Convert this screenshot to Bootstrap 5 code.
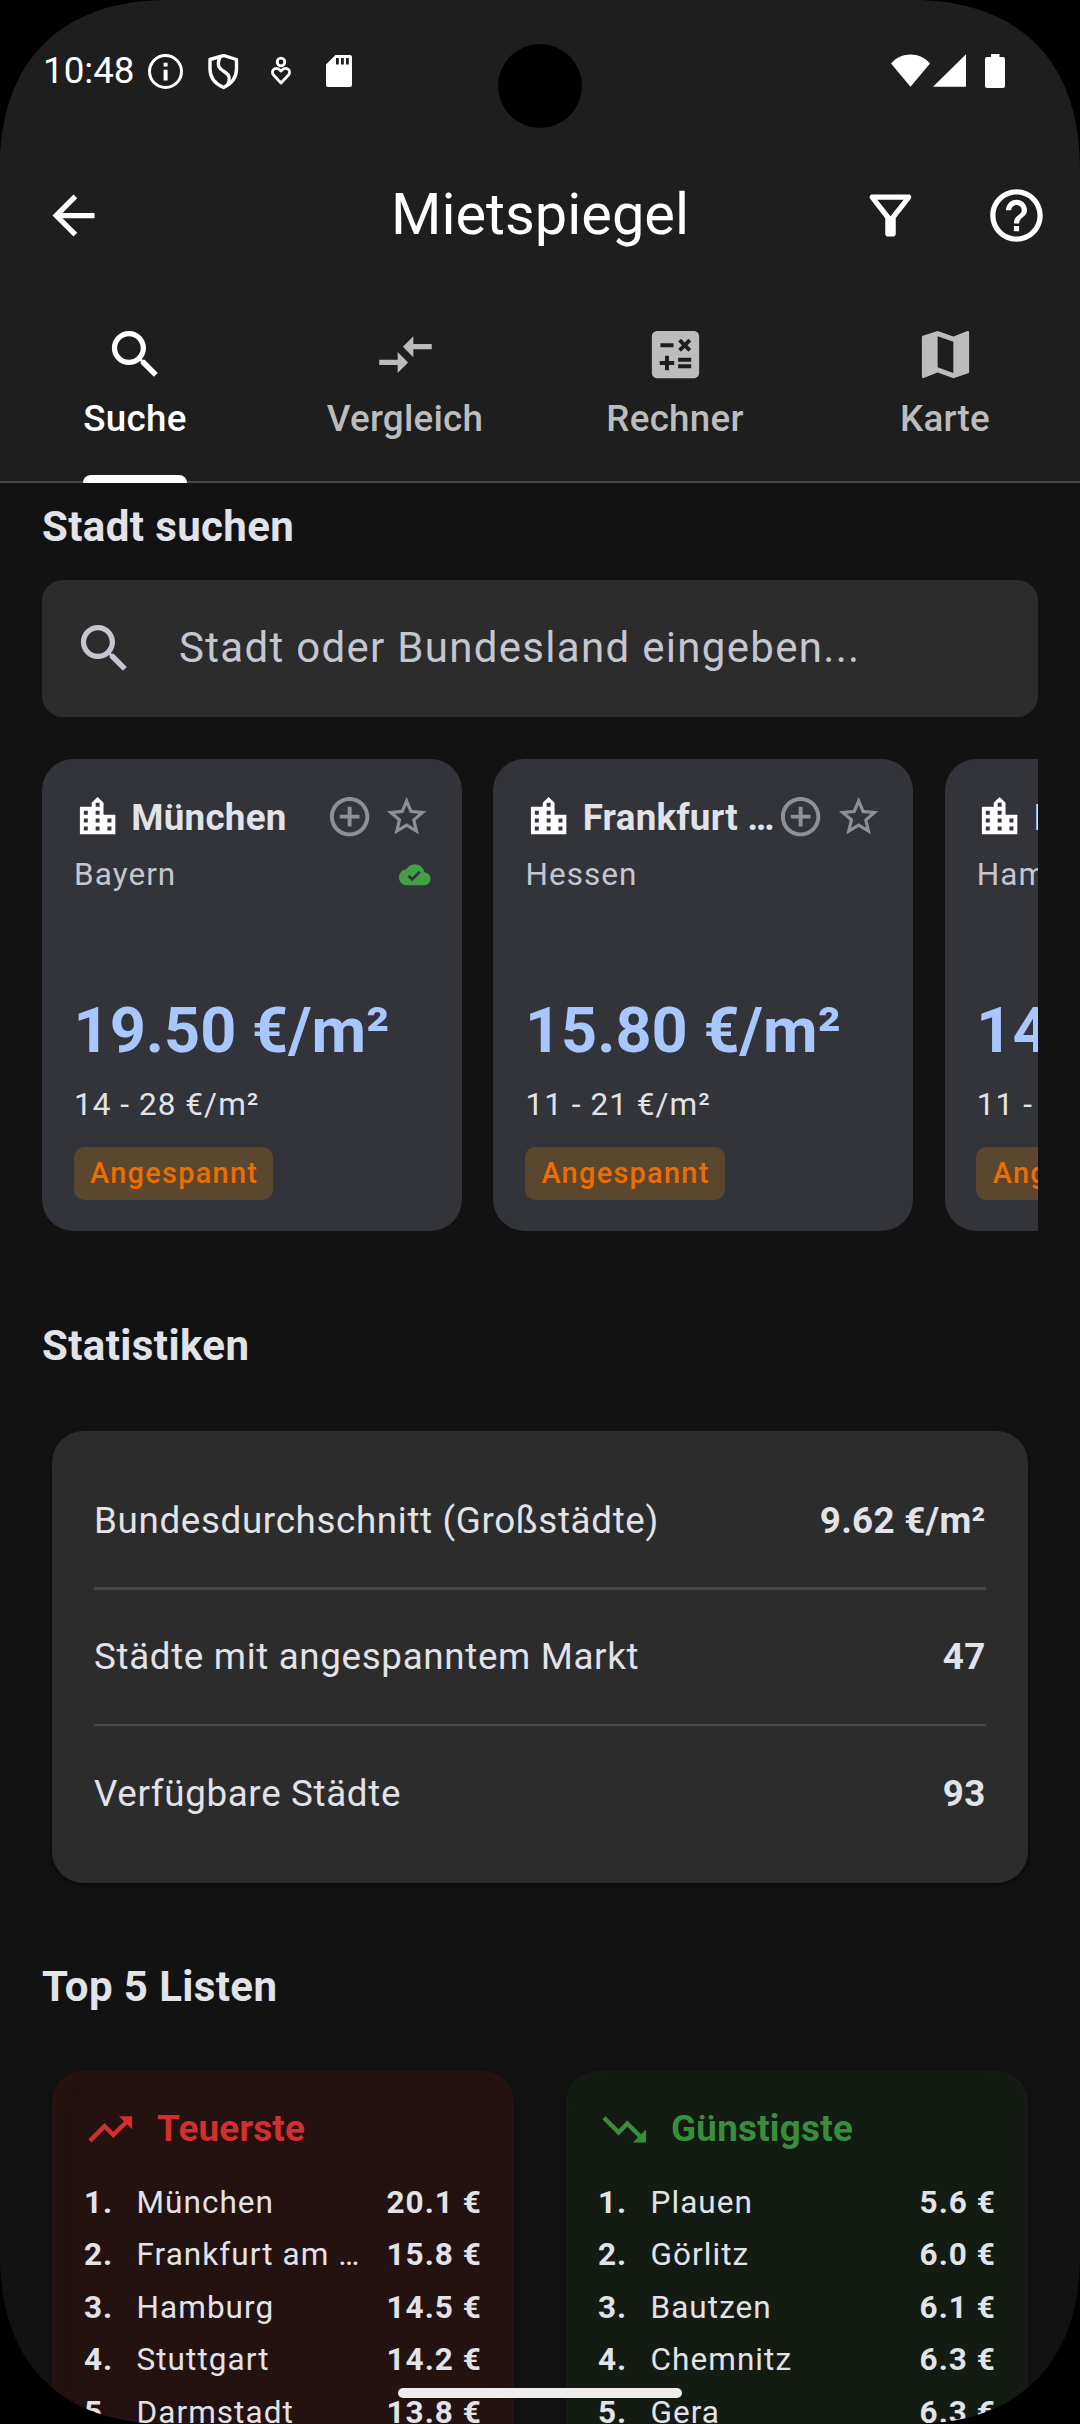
<!DOCTYPE html>
<html lang="de" data-bs-theme="dark">
<head>
<meta charset="utf-8">
<meta name="viewport" content="width=device-width, initial-scale=1">
<title>Mietspiegel</title>
<link href="https://cdn.jsdelivr.net/npm/bootstrap@5.3.0/dist/css/bootstrap.min.css" rel="stylesheet">
<style>
  :root { --ink: #e2e2e9; --muted: #c4c6d0; --line: #43474a; }
  body { margin: 0; background: #000; font-family: Roboto, "Liberation Sans", sans-serif; color: var(--ink); overflow: hidden; }
  svg { display: block; flex: none; fill: currentColor; }
  .phone { width: 1080px; height: 2424px; background: #121212; }
  .topbar { height: 483px; background: #1e1e1e; color: #fff; }
  .statusbar { height: 142px; padding: 0 74px 0 43px; }
  .clock { font-size: 36.75px; line-height: 52px; padding-top: 45px; width: 105px; }
  .status-icons { padding-top: 54px; height: 90px; }
  .appbar { height: 147px; padding: 0 32px 0 42px; }
  .screen-title { font-size: 57.75px; line-height: 73.5px; font-weight: 400; padding-bottom: 1px; }
  .i24 { width: 63px; height: 63px; }
  .i20 { width: 52.5px; height: 52.5px; }
  .i18 { width: 47.25px; height: 47.25px; }
  .i12 { width: 31.5px; height: 31.5px; }
  .actions { gap: 63px; }
  .tabs-row { height: 194px; border-bottom: 2px solid var(--line); }
  .tabs-row .nav-link { color: #bcbcbc; font-size: 36.75px; line-height: 52.5px; font-weight: 500; letter-spacing: .26px; padding: 34px 0 0; border: 0; border-radius: 0; height: 194px; }
  .tabs-row .nav-link.active { color: #fff; background: none; }
  .tabs-row .nav-link span { margin-top: 6.5px; }
  .indicator { width: 104px; height: 8px; background: #fff; border-radius: 8px 8px 0 0; margin-top: auto; }
  .content { padding: 12px 42px 0; }
  .heading { font-size: 42px; line-height: 63px; font-weight: 700; letter-spacing: .39px; margin: 0; color: var(--ink); }
  .heading-stats { margin-top: 82.5px; }
  .heading-top { margin-top: 72.5px; }
  .searchbox { height: 137px; margin-top: 22px; border-radius: 21px; background: #2c2c2c; color: var(--muted); padding: 0 31px; gap: 43px; }
  .searchbox div { font-size: 42px; letter-spacing: 1.31px; line-height: 63px; padding-bottom: 2px; }
  .city-strip { margin-top: 42px; gap: 31.4px; overflow: hidden; height: 472.5px; }
  .city { width: 420px; flex: none; height: 472px; background: #33343a; border: 0; border-radius: 31.5px; padding: 31.5px; color: var(--ink); }
  .city-name { font-size: 36.75px; line-height: 51.5px; padding-top: 1px; font-weight: 700; letter-spacing: .26px; margin-left: 10.5px; white-space: nowrap; }
  .ic-outline { color: #8e9099; }
  .star-ic { margin-left: 10.5px; }
  .t12 { font-size: 31.5px; line-height: 42px; letter-spacing: 1.05px; }
  .state { color: var(--muted); margin-top: 10.5px; padding-left: .5px; }
  .price { font-size: 63px; line-height: 84px; font-weight: 700; color: #a8c7ff; white-space: nowrap; }
  .range { margin: 10.5px 0 21px; padding-left: .5px; white-space: nowrap; }
  .market { font-size: 28.875px; line-height: 42px; font-weight: 500; letter-spacing: 1.31px; color: #ef6c00; background: #5b472e; border-radius: 10.5px; padding: 5.5px 15px 5.25px 16.5px; white-space: nowrap; }
  .stats { margin: 54px 10.5px 0 10px; background: #2c2c2c; border: 0; border-radius: 31.5px; padding: 42px; height: 451.5px; box-shadow: 0 3px 6px rgba(0,0,0,.4); color: var(--ink); }
  .stat-line { padding: 22px 0 20px; font-size: 36.75px; line-height: 52.5px; letter-spacing: .656px; }
  .stat-line b { font-weight: 700; letter-spacing: .26px; }
  .rule { height: 2.6px; background: #43474e; margin: 19.7px 0; }
  .tops { margin: 53px 10.5px 0 10px; gap: 52.5px; }
  .rank { flex: 1 1 0; border: 0; border-radius: 31.5px; padding: 32px 31.5px; height: 480px; color: var(--ink); }
  .rank-hot { background: #241211; box-shadow: 0 3px 6px rgba(0,0,0,.25), inset 0 0 18px #281513; }
  .rank-low { background: #141b13; box-shadow: 0 3px 6px rgba(0,0,0,.25), inset 0 0 18px #161e16; }
  .rank-head { font-size: 36.75px; line-height: 52.5px; font-weight: 700; letter-spacing: .26px; gap: 21px; margin-bottom: 21px; }
  .hot { color: #d32f2f; } .low { color: #388e3c; }
  .rank-row { padding: 5.25px 0; }
  .rank-row b { font-weight: 700; white-space: nowrap; }
  .rank-row b:first-child { width: 52.5px; padding-left: .5px; }
  .rank-row span { padding-left: .5px; }
  .camera { position: absolute; left: 498px; top: 44px; width: 84px; height: 84px; border-radius: 50%; background: #000; }
  .homebar { position: absolute; left: 398px; top: 2388px; width: 284px; height: 10px; border-radius: 5px; background: #eeecec; }
  .bezel { position: absolute; inset: 0; fill: #000; }
</style>
</head>
<body>
<svg width="0" height="0" class="position-absolute" aria-hidden="true">
  <symbol id="search" viewBox="0 0 24 24"><path d="M15.5 14h-.79l-.28-.27C15.41 12.59 16 11.11 16 9.5 16 5.91 13.09 3 9.5 3S3 5.91 3 9.5 5.91 16 9.5 16c1.61 0 3.09-.59 4.23-1.57l.27.28v.79l5 4.99L20.49 19l-4.99-5zm-6 0C7.01 14 5 11.99 5 9.5S7.01 5 9.5 5 14 7.01 14 9.5 11.99 14 9.5 14z"/></symbol>
  <symbol id="city" viewBox="0 0 24 24"><path d="M15 11V5l-3-3-3 3v2H3v14h18V11h-6zm-8 8H5v-2h2v2zm0-4H5v-2h2v2zm0-4H5V9h2v2zm6 8h-2v-2h2v2zm0-4h-2v-2h2v2zm0-4h-2V9h2v2zm0-4h-2V5h2v2zm6 12h-2v-2h2v2zm0-4h-2v-2h2v2z"/></symbol>
  <symbol id="plus" viewBox="0 0 24 24"><path d="M13 7h-2v4H7v2h4v4h2v-4h4v-2h-4V7zm-1-5C6.48 2 2 6.48 2 12s4.48 10 10 10 10-4.48 10-10S17.52 2 12 2zm0 18c-4.41 0-8-3.59-8-8s3.59-8 8-8 8 3.59 8 8-3.59 8-8 8z"/></symbol>
  <symbol id="star" viewBox="0 0 24 24"><path d="M22 9.24l-7.19-.62L12 2 9.19 8.63 2 9.24l5.46 4.73L5.82 21 12 17.27 18.18 21l-1.63-7.03L22 9.24zM12 15.4l-3.76 2.27 1-4.28-3.32-2.88 4.38-.38L12 6.1l1.71 4.04 4.38.38-3.32 2.88 1 4.28L12 15.4z"/></symbol>
</svg>

<div class="phone position-relative overflow-hidden">
  <header class="topbar">
    <div class="statusbar d-flex align-items-start justify-content-between">
      <div class="d-flex align-items-start">
        <div class="clock">10:48</div>
        <svg class="status-icons" width="212" viewBox="148 0 212 36">
          <g fill="none" stroke="#fff" stroke-width="3">
            <circle cx="165.500" cy="17.500" r="16"/>
            <path d="M210 5.500 L223.500 1.500 L236.500 5.500 V15 C236.500 24 231 30 223.500 33.500 C215.500 30 210 24 210 15 Z" stroke-width="3.400" stroke-linejoin="round"/>
            <path d="M220 3.500 C215.500 13 221 15.500 225.500 18.500 C230 21.500 230.500 25 227.500 31" stroke-width="3.400"/>
            <circle cx="281" cy="8" r="3.800" stroke-width="2.800"/>
            <path d="M281 29 L273.500 21 C270 16 276 11.500 281 17 C286 11.500 292 16 288.500 21 Z" stroke-width="2.800" stroke-linejoin="round"/>
          </g>
          <path d="M163.600 8.800h4v3.700h-4zM163.600 15.800h4v10.700h-4z"/>
          <path fill-rule="evenodd" d="M335.500 1H350a2 2 0 0 1 2 2V31a2 2 0 0 1-2 2H328a2 2 0 0 1-2-2V10.500ZM336 4v6.500h2.800V4ZM341 4v6.500h2.800V4ZM346 4v6.500h2.800V4Z"/>
        </svg>
      </div>
      <svg class="status-icons" width="116" viewBox="890 0 116 36">
        <path d="M891 9.500 C901 -2.500 920 -2.500 930 9.500 L910.500 32.700Z"/>
        <path d="M966 .3V32.800H933Z"/>
        <path d="M991 0h8.500v3H1003a2 2 0 0 1 2 2V32a2 2 0 0 1-2 2H987a2 2 0 0 1-2-2V5a2 2 0 0 1 2-2h4Z"/>
      </svg>
    </div>

    <div class="appbar d-flex align-items-center justify-content-between position-relative">
      <svg class="i24" viewBox="0 0 24 24"><path d="M20 11H7.830l5.590-5.590L12 4l-8 8 8 8 1.410-1.410L7.830 13H20v-2z"/></svg>
      <h1 class="screen-title position-absolute start-50 translate-middle-x m-0">Mietspiegel</h1>
      <div class="actions d-flex">
        <svg class="i24" viewBox="0 0 24 24"><path d="M7 6h10l-5.010 6.300L7 6zm-2.750-.39C6.270 8.200 10 13 10 13v6c0 .55.45 1 1 1h2c.55 0 1-.45 1-1v-6s3.720-4.800 5.740-7.390c.51-.66.04-1.610-.79-1.610H5.040c-.83 0-1.300.95-.79 1.610z"/></svg>
        <svg class="i24" viewBox="0 0 24 24"><path d="M11 18h2v-2h-2v2zm1-16C6.480 2 2 6.480 2 12s4.480 10 10 10 10-4.480 10-10S17.520 2 12 2zm0 18c-4.410 0-8-3.590-8-8s3.590-8 8-8 8 3.590 8 8-3.590 8-8 8zm0-14c-2.210 0-4 1.790-4 4h2c0-1.100.9-2 2-2s2 .9 2 2c0 2-3 1.750-3 5h2c0-2.250 3-2.500 3-5 0-2.210-1.790-4-4-4z"/></svg>
      </div>
    </div>

    <nav class="tabs-row nav nav-fill flex-nowrap">
      <a class="nav-link active col-3 d-flex flex-column align-items-center"><svg class="i24"><use href="#search"/></svg><span>Suche</span><div class="indicator"></div></a>
      <a class="nav-link col-3 d-flex flex-column align-items-center"><svg class="i24" viewBox="0 0 24 24"><path d="M9.010 14H2v2h7.010v3L13 15l-3.990-4v3zm5.980-1v-3H22V8h-7.010V5L11 9l3.990 4z"/></svg><span>Vergleich</span></a>
      <a class="nav-link col-3 d-flex flex-column align-items-center"><svg class="i24" viewBox="0 0 24 24"><path d="M19 3H5c-1.100 0-2 .9-2 2v14c0 1.100.9 2 2 2h14c1.100 0 2-.9 2-2V5c0-1.100-.9-2-2-2zm-5.970 4.060L14.090 6l1.410 1.410L16.910 6l1.060 1.060-1.410 1.410 1.410 1.410-1.060 1.060-1.410-1.400-1.410 1.410-1.060-1.060 1.410-1.410-1.410-1.420zm-6.780.66h5v1.500h-5v-1.500zM11.500 16h-2v2H8v-2H6v-1.500h2v-2h1.500v2h2V16zm6.500 1.250h-5v-1.500h5v1.500zm0-2.500h-5v-1.500h5v1.500z"/></svg><span>Rechner</span></a>
      <a class="nav-link col-3 d-flex flex-column align-items-center"><svg class="i24" viewBox="0 0 24 24"><path d="M20.500 3l-.16.03L15 5.100 9 3 3.360 4.900c-.21.07-.36.25-.36.480V20.500c0 .28.22.5.5.5l.16-.03L9 18.900l6 2.100 5.640-1.900c.21-.07.36-.25.36-.48V3.500c0-.28-.22-.5-.5-.5zM15 19l-6-2.110V5l6 2.110V19z"/></svg><span>Karte</span></a>
    </nav>
  </header>

  <main class="content">
    <h2 class="heading">Stadt suchen</h2>
    <div class="searchbox d-flex align-items-center">
      <svg class="i24"><use href="#search"/></svg>
      <div>Stadt oder Bundesland eingeben...</div>
    </div>

    <section class="city-strip d-flex">
      <article class="city card">
        <div class="d-flex align-items-center">
          <svg class="i18 text-white"><use href="#city"/></svg>
          <div class="city-name flex-grow-1">München</div>
          <svg class="i18 ic-outline"><use href="#plus"/></svg>
          <svg class="i18 ic-outline star-ic"><use href="#star"/></svg>
        </div>
        <div class="state t12 d-flex align-items-center justify-content-between">Bayern
          <svg class="i12" viewBox="0 0 24 24"><path fill="#43a047" d="M19.350 10.040C18.670 6.590 15.640 4 12 4 9.110 4 6.600 5.640 5.350 8.040 2.340 8.360 0 10.910 0 14c0 3.310 2.690 6 6 6h13c2.760 0 5-2.240 5-5 0-2.640-2.050-4.780-4.650-4.960zM10 17l-3.500-3.500 1.410-1.410L10 14.170 15.180 9l1.410 1.410L10 17z"/></svg>
        </div>
        <div class="price mt-auto">19.50 €/m²</div>
        <div class="range t12">14 - 28 €/m²</div>
        <div class="market align-self-start">Angespannt</div>
      </article>
      <article class="city card">
        <div class="d-flex align-items-center">
          <svg class="i18 text-white"><use href="#city"/></svg>
          <div class="city-name flex-grow-1">Frankfurt …</div>
          <svg class="i18 ic-outline"><use href="#plus"/></svg>
          <svg class="i18 ic-outline star-ic"><use href="#star"/></svg>
        </div>
        <div class="state t12">Hessen</div>
        <div class="price mt-auto">15.80 €/m²</div>
        <div class="range t12">11 - 21 €/m²</div>
        <div class="market align-self-start">Angespannt</div>
      </article>
      <article class="city card">
        <div class="d-flex align-items-center">
          <svg class="i18 text-white"><use href="#city"/></svg>
          <div class="city-name flex-grow-1">Hamburg</div>
        </div>
        <div class="state t12">Hamburg</div>
        <div class="price mt-auto">14.50 €/m²</div>
        <div class="range t12">11 - 20 €/m²</div>
        <div class="market align-self-start">Angespannt</div>
      </article>
    </section>

    <h2 class="heading heading-stats">Statistiken</h2>
    <section class="stats card">
      <div class="stat-line d-flex justify-content-between"><span>Bundesdurchschnitt (Großstädte)</span><b>9.62 €/m²</b></div>
      <div class="rule"></div>
      <div class="stat-line d-flex justify-content-between"><span>Städte mit angespanntem Markt</span><b>47</b></div>
      <div class="rule"></div>
      <div class="stat-line d-flex justify-content-between"><span>Verfügbare Städte</span><b>93</b></div>
    </section>

    <h2 class="heading heading-top">Top 5 Listen</h2>
    <section class="tops d-flex">
      <div class="rank rank-hot card">
        <div class="rank-head hot d-flex align-items-center">
          <svg class="i20" viewBox="0 0 24 24"><path d="M16 6l2.290 2.290-4.880 4.880-4-4L2 16.590 3.410 18l6-6 4 4 6.300-6.290L22 12V6z"/></svg>Teuerste</div>
        <div class="rank-row t12 d-flex"><b>1.</b><span class="flex-grow-1">München</span><b>20.1 €</b></div>
        <div class="rank-row t12 d-flex"><b>2.</b><span class="flex-grow-1">Frankfurt am …</span><b>15.8 €</b></div>
        <div class="rank-row t12 d-flex"><b>3.</b><span class="flex-grow-1">Hamburg</span><b>14.5 €</b></div>
        <div class="rank-row t12 d-flex"><b>4.</b><span class="flex-grow-1">Stuttgart</span><b>14.2 €</b></div>
        <div class="rank-row t12 d-flex"><b>5.</b><span class="flex-grow-1">Darmstadt</span><b>13.8 €</b></div>
      </div>
      <div class="rank rank-low card">
        <div class="rank-head low d-flex align-items-center">
          <svg class="i20" viewBox="0 0 24 24"><path d="M16 18l2.290-2.290-4.880-4.880-4 4L2 7.410 3.410 6l6 6 4-4 6.300 6.290L22 12v6z"/></svg>Günstigste</div>
        <div class="rank-row t12 d-flex"><b>1.</b><span class="flex-grow-1">Plauen</span><b>5.6 €</b></div>
        <div class="rank-row t12 d-flex"><b>2.</b><span class="flex-grow-1">Görlitz</span><b>6.0 €</b></div>
        <div class="rank-row t12 d-flex"><b>3.</b><span class="flex-grow-1">Bautzen</span><b>6.1 €</b></div>
        <div class="rank-row t12 d-flex"><b>4.</b><span class="flex-grow-1">Chemnitz</span><b>6.3 €</b></div>
        <div class="rank-row t12 d-flex"><b>5.</b><span class="flex-grow-1">Gera</span><b>6.3 €</b></div>
      </div>
    </section>
  </main>

  <div class="camera"></div>
  <div class="homebar"></div>
  <svg class="bezel" width="1080" height="2424" viewBox="0 0 1080 2424">
    <path d="M0 0H168C61 0 0 61 0 168ZM1080 0V168C1080 61 1019 0 912 0ZM0 2424V2256C0 2363 61 2424 168 2424ZM1080 2424H912C1019 2424 1080 2363 1080 2256Z"/>
  </svg>
</div>
<script src="https://cdn.jsdelivr.net/npm/bootstrap@5.3.0/dist/js/bootstrap.bundle.min.js"></script>
</body>
</html>
